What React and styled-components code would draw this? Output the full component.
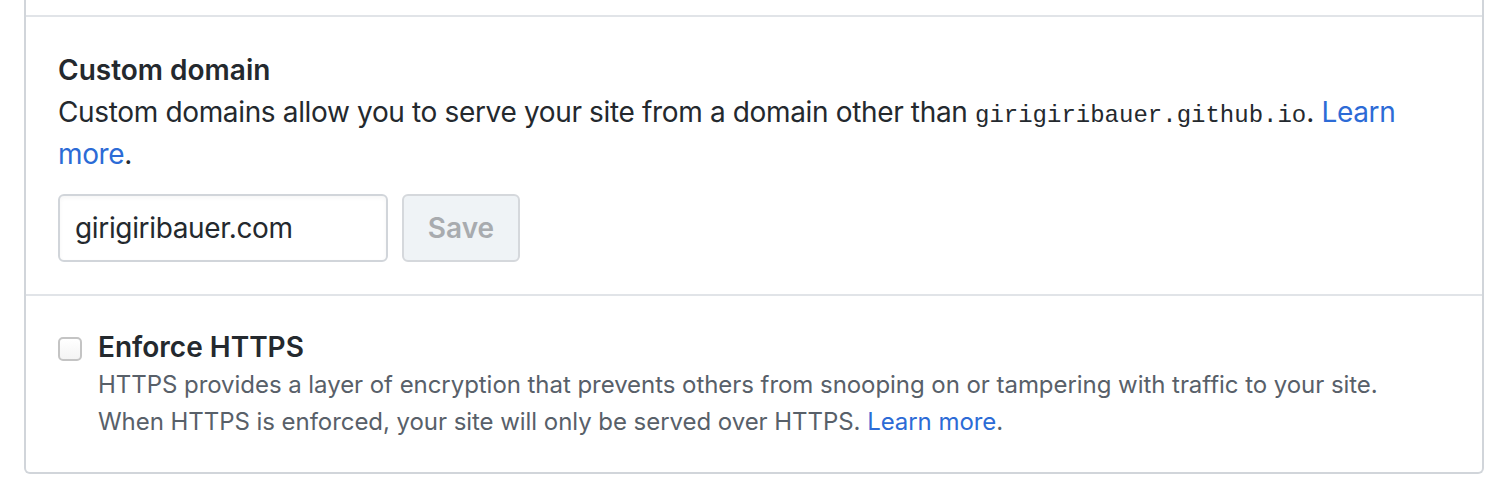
import React from 'react';
import styled, { createGlobalStyle } from 'styled-components';

const GlobalStyle = createGlobalStyle`
  html, body {
    margin: 0;
    padding: 0;
    background: #fff;
  }
  body {
    font-family: Inter, "Liberation Sans", Arial, sans-serif;
    color: #24292e;
  }
`;

const Page = styled.div`
  width: 1512px;
  height: 496px;
  padding: 0 28px 0 24px;
  box-sizing: border-box;
  overflow: hidden;
`;

const Box = styled.div`
  border: 2px solid #d1d5da;
  border-top: 0;
  border-radius: 0 0 6px 6px;
`;

const Stub = styled.div`
  height: 15px;
`;

const Section = styled.div`
  border-top: 2px solid #e1e4e8;
  padding: 32px;
`;

const Heading = styled.h3`
  margin: 0;
  font-size: 28px;
  line-height: 42px;
  font-weight: 600;
  color: #24292e;
`;

const Text = styled.p`
  margin: 0;
  font-size: 28px;
  line-height: 42px;
  letter-spacing: -0.35px;
  color: #24292e;
`;

const Code = styled.code`
  font-family: "Liberation Mono", "DejaVu Sans Mono", monospace;
  font-size: 24px;
  line-height: 1;
  letter-spacing: 0;
`;

const Link = styled.a`
  color: #2c6bd6;
  text-decoration: none;
`;

const Form = styled.div`
  display: flex;
  gap: 14px;
  margin-top: 19px;
`;

const Input = styled.input`
  width: 330px;
  height: 68px;
  box-sizing: border-box;
  padding: 0 15px;
  border: 2px solid #d1d5da;
  border-radius: 6px;
  font-family: Inter, "Liberation Sans", Arial, sans-serif;
  font-size: 28px;
  letter-spacing: -0.35px;
  color: #24292e;
  background: #fff;
  box-shadow: inset 0 2px 4px rgba(27, 31, 35, 0.04);
  outline: none;
`;

const Button = styled.button`
  height: 68px;
  width: 118px;
  box-sizing: border-box;
  border: 2px solid #d5d8dc;
  border-radius: 6px;
  background: #eff3f6;
  color: #a8abaf;
  font-family: Inter, "Liberation Sans", Arial, sans-serif;
  font-size: 28px;
  font-weight: 600;
  padding: 0;
`;

const CheckRow = styled.div`
  display: grid;
  grid-template-columns: 24px 1fr;
  column-gap: 16px;
`;

const Checkbox = styled.span`
  width: 24px;
  height: 24px;
  box-sizing: border-box;
  margin-top: 9px;
  border: 2px solid #c4c4c4;
  border-radius: 5px;
  background: linear-gradient(#ffffff, #f4f4f4);
`;

const Label = styled.div`
  font-size: 28px;
  line-height: 38px;
  font-weight: 600;
  color: #24292e;
`;

const Note = styled.p`
  margin: 0;
  font-size: 24px;
  line-height: 37px;
  letter-spacing: -0.05px;
  color: #586069;
`;

export default function App() {
  return (
    <Page>
      <GlobalStyle />
      <Box>
        <Stub />
        <Section>
          <Heading>Custom domain</Heading>
          <Text>
            Custom domains allow you to serve your site from a domain other than{' '}
            <Code>girigiribauer.github.io</Code>. <Link href="#">Learn more</Link>.
          </Text>
          <Form>
            <Input defaultValue="girigiribauer.com" />
            <Button disabled>Save</Button>
          </Form>
        </Section>
        <Section>
          <CheckRow>
            <Checkbox />
            <div>
              <Label>Enforce HTTPS</Label>
              <Note>
                HTTPS provides a layer of encryption that prevents others from snooping on or tampering with traffic to your site.
                <br />
                When HTTPS is enforced, your site will only be served over HTTPS. <Link href="#">Learn more</Link>.
              </Note>
            </div>
          </CheckRow>
        </Section>
      </Box>
    </Page>
  );
}
